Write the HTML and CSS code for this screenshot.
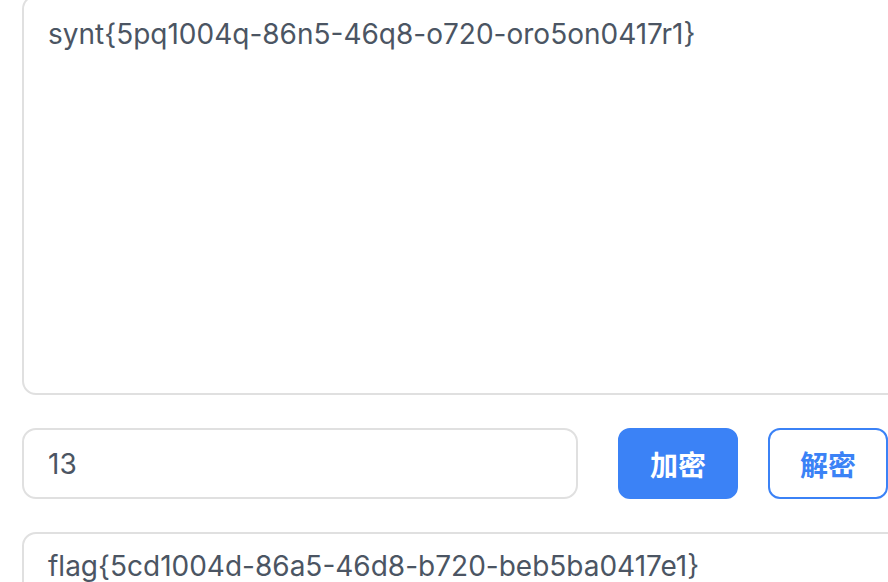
FILE: index.html
```html
<!DOCTYPE html>
<html lang="zh-CN">
<head>
<meta charset="utf-8">
<title>ROT13</title>
<link rel="stylesheet" href="styles.css">
</head>
<body>
<main class="page">
  <textarea class="box box-input" spellcheck="false">synt{5pq1004q-86n5-46q8-o720-oro5on0417r1}</textarea>
  <div class="controls">
    <input class="shift" type="text" value="13">
    <button class="btn btn-primary" type="button">加密</button>
    <button class="btn btn-outline" type="button">解密</button>
  </div>
  <textarea class="box box-output" spellcheck="false">flag{5cd1004d-86a5-46d8-b720-beb5ba0417e1}</textarea>
</main>
</body>
</html>
```
FILE: styles.css
```css
html, body {
  margin: 0;
  padding: 0;
  background: #ffffff;
  overflow: hidden;
}

.page {
  display: flex;
  flex-direction: column;
  gap: 33px;
  padding-left: 22px;
  margin-top: -5px;
  width: 940px;
  font-family: Inter, "Noto Sans CJK SC", sans-serif;
}

.box,
.shift {
  box-sizing: border-box;
  border: 2px solid #e0e0e0;
  border-radius: 14px;
  padding: 12.5px 24px;
  font-family: Inter, "Noto Sans CJK SC", sans-serif;
  font-size: 28px;
  line-height: 42px;
  color: #4b5563;
  background: #ffffff;
  outline: none;
  resize: none;
}

.box {
  display: block;
  width: 940px;
  overflow: hidden;
}

.box-input {
  height: 400px;
  padding-top: 16px;
}

.box-output {
  height: 200px;
  padding-top: 11px;
}

.controls {
  display: flex;
  align-items: stretch;
}

.shift {
  width: 556px;
  height: 71px;
}

.btn {
  box-sizing: border-box;
  width: 120px;
  height: 71px;
  border-radius: 12px;
  font-family: "Noto Sans CJK SC", sans-serif;
  font-size: 28px;
  font-weight: 700;
  cursor: pointer;
}

.btn-primary {
  margin-left: 40px;
  background: #3b82f6;
  border: 2px solid #3b82f6;
  color: #ffffff;
}

.btn-outline {
  margin-left: 30px;
  background: #ffffff;
  border: 2px solid #3b82f6;
  color: #3b82f6;
}
```
